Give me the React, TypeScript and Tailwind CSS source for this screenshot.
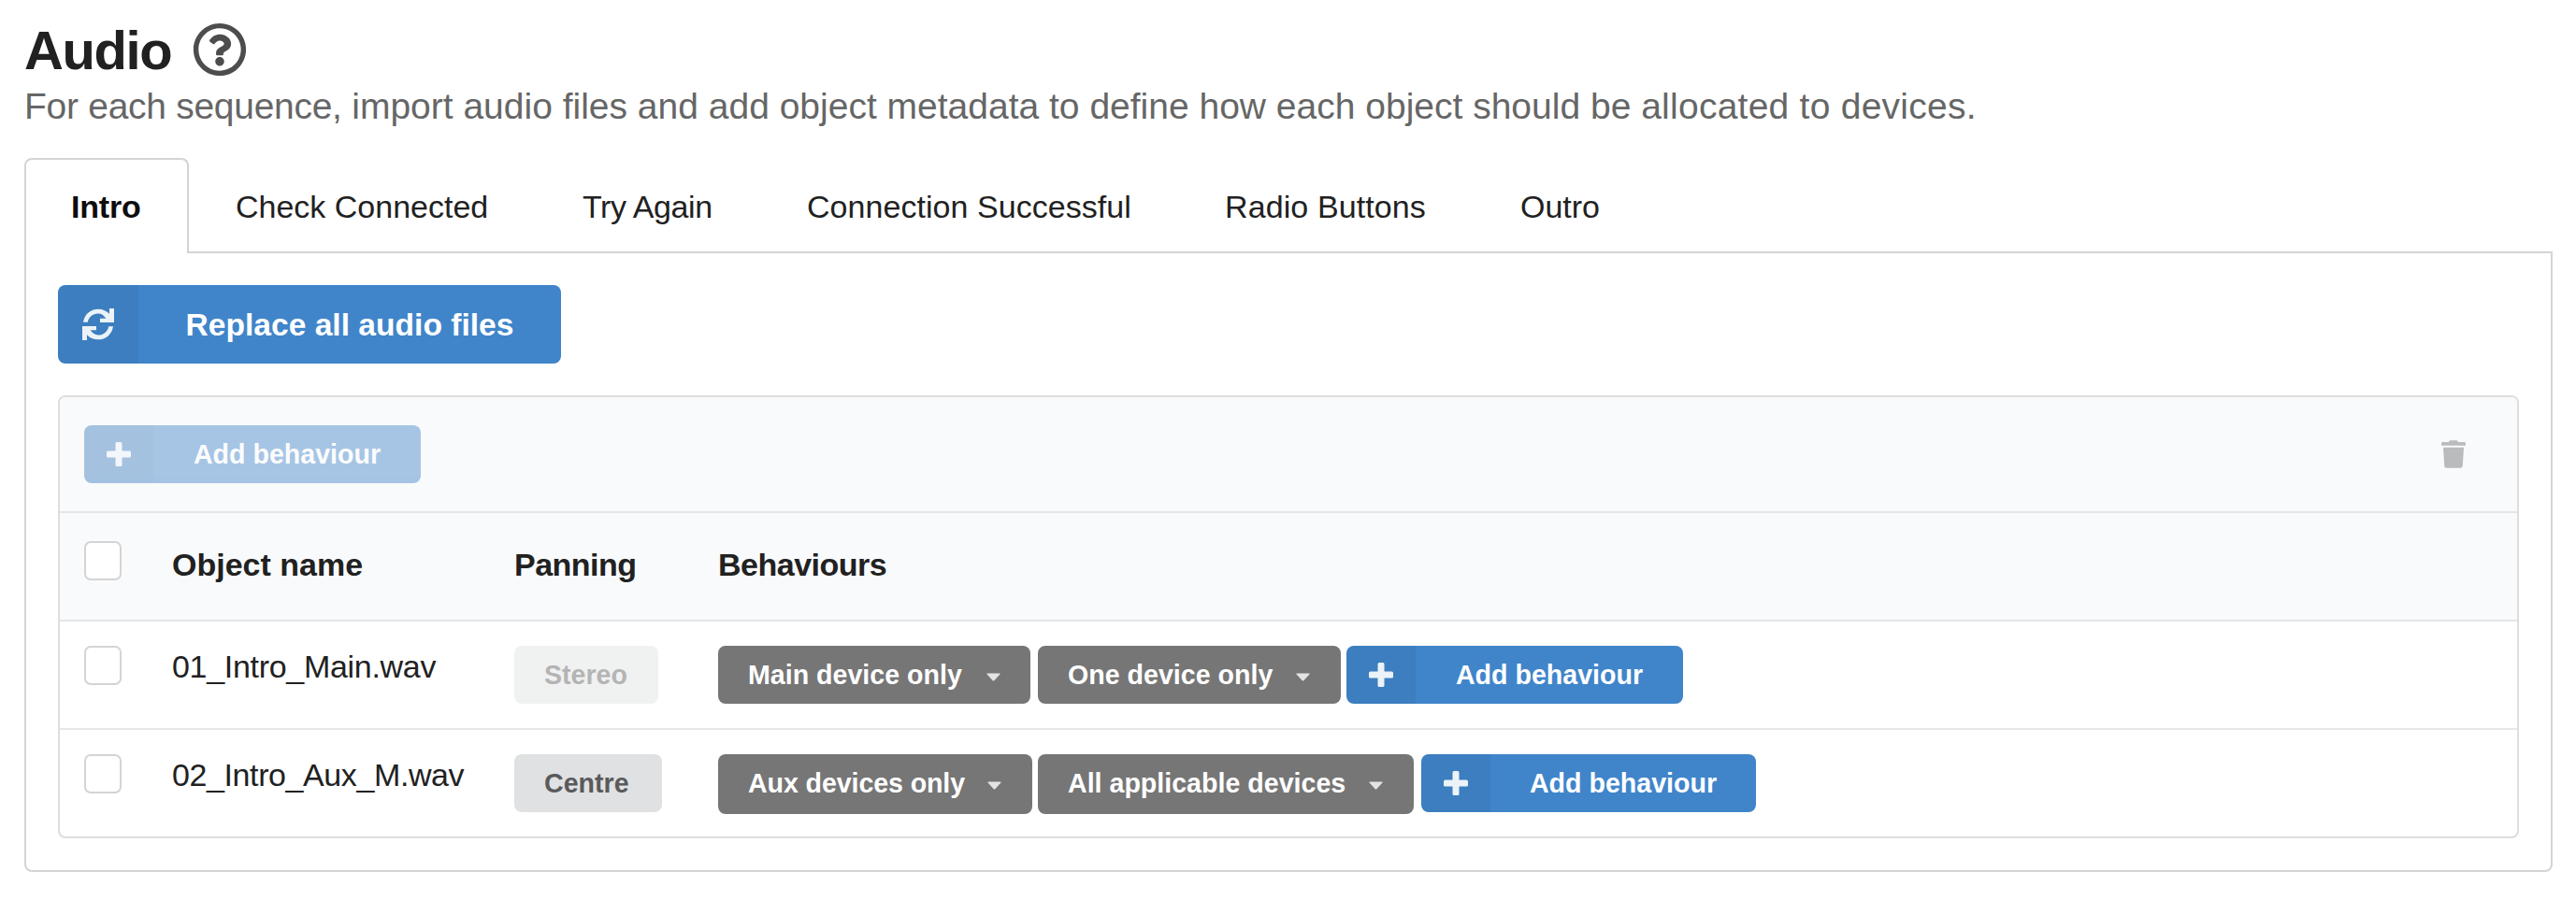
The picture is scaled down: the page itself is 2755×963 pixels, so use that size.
import { useState } from "react";
import { FaRegQuestionCircle } from "react-icons/fa";

const tabs = [
  { label: "Intro", box: "w-[176px] pl-[48px]", text: "tracking-[-0.2px]" },
  { label: "Check Connected", box: "w-[372px] pl-[50px]", text: "" },
  { label: "Try Again", box: "w-[239px] pl-[49px]", text: "tracking-[-0.4px]" },
  { label: "Connection Successful", box: "w-[447px] pl-[50px]", text: "tracking-[0.05px]" },
  { label: "Radio Buttons", box: "w-[316px] pl-[50px]", text: "tracking-[0.1px]" },
  { label: "Outro", box: "w-[190px] pl-[50px]", text: "" },
];

const rows = [
  {
    name: "01_Intro_Main.wav",
    nameText: "tracking-[-0.3px]",
    panning: "Stereo",
    locked: true,
    behaviours: [
      { label: "Main device only", box: "h-[62px] w-[334px] mr-[8px] pr-[32px]" },
      { label: "One device only", box: "h-[62px] w-[324px] mr-[6px] pr-[33px]" },
    ],
    addBox: "w-[360px]",
  },
  {
    name: "02_Intro_Aux_M.wav",
    nameText: "tracking-[-0.4px]",
    panning: "Centre",
    locked: false,
    behaviours: [
      { label: "Aux devices only", box: "h-[64px] w-[336px] mr-[6px] pr-[33px] tracking-[-0.1px]" },
      { label: "All applicable devices", box: "h-[64px] w-[402px] mr-[8px] pr-[33px]" },
    ],
    addBox: "w-[358px]",
  },
];

function PlusIcon() {
  return (
    <svg viewBox="0 0 26 26" className="size-[26px]" fill="currentColor">
      <path d="M11 0h4q1.500 0 1.500 1.500V9.500H24.500Q26 9.500 26 11v4q0 1.500-1.500 1.500H16.500V24.500Q16.500 26 15 26h-4q-1.500 0-1.500-1.500V16.500H1.500Q0 16.500 0 15v-4q0-1.500 1.500-1.500H9.500V1.500Q9.500 0 11 0Z" />
    </svg>
  );
}

function RefreshIcon() {
  const half = "M3 44.500C7 18 27 2 51 2C66 2 78 8 87 17.500V0H102V45H57V32H76C69 22 61 16.500 51 16.500C34 16.500 20 28 17.500 44.500Z";
  return (
    <svg viewBox="0 0 102 102" className="size-[34px]" fill="currentColor">
      <path d={half} />
      <path d={half} transform="rotate(180 51 51)" />
    </svg>
  );
}

function TrashIcon() {
  return (
    <svg viewBox="0 0 26 30" className="mt-[16px] h-[30px] w-[26px] text-[#babbbc]" fill="currentColor">
      <path d="M1.200 2H8L9 .3H17L18 2H24.800Q26 2 26 3.200V5.800H0V3.200Q0 2 1.200 2Z" />
      <path d="M2 7.800H24L22.800 27.600Q22.700 29.800 20.500 29.800H5.500Q3.300 29.800 3.200 27.600Z" />
    </svg>
  );
}

function CaretIcon() {
  return (
    <svg viewBox="0 0 15 9" className="mt-[29px] h-[9px] w-[15px] opacity-80" fill="currentColor">
      <path d="M1 .5H14Q15.200 .6 14.400 1.600L8.300 8.200Q7.500 8.900 6.700 8.200L.6 1.600Q-.2 .6 1 .5Z" />
    </svg>
  );
}

function Checkbox() {
  return <button type="button" role="checkbox" aria-checked={false} className="block h-[42px] w-[40px] rounded-[7px] border-2 border-[#d4d4d5] bg-white" />;
}

function AddButton({ box, disabled = false }: { box: string; disabled?: boolean }) {
  return (
    <button
      type="button"
      disabled={disabled}
      className={`flex h-[62px] overflow-hidden rounded-[8px] bg-[#4085ca] text-white ${box} ${disabled ? "opacity-45" : ""}`}
    >
      <span className="flex h-full w-[74px] items-center justify-center bg-black/5">
        <span className="opacity-90">
          <PlusIcon />
        </span>
      </span>
      <span className="flex-1 text-center text-[28.6px] leading-[63px] font-bold whitespace-nowrap">Add behaviour</span>
    </button>
  );
}

export default function App() {
  const [active, setActive] = useState("Intro");
  return (
    <main className="h-[963px] w-[2755px] overflow-hidden bg-white pt-[24px] pl-[26px] font-['Liberation_Sans',Arial,sans-serif] text-[34px] text-[#212121]">
      <header>
        <h1 className="flex h-[60px] items-center text-[58px] leading-[60px] font-bold">
          <span className="w-[180px] tracking-[-1.4px]">Audio</span>
          <FaRegQuestionCircle className="-mt-[2px] size-[58px] text-[#4d4d4d]" />
        </h1>
        <p className="h-[85px] text-[39px] leading-[60px] whitespace-nowrap text-[#666666]">
          <span className="tracking-[-0.28px]">For each sequence, </span>
          import audio files and add object metadata to define how each object should be{" "}
          <span className="tracking-[0.25px]">allocated to devices.</span>
        </p>
      </header>

      <nav className="flex h-[102px]">
        {tabs.map((tab) => (
          <button
            key={tab.label}
            type="button"
            onClick={() => setActive(tab.label)}
            className={`text-left leading-[101px] whitespace-nowrap ${tab.box} ${
              tab.label === active
                ? "relative z-10 rounded-t-[8px] border-2 border-b-0 border-[#d4d4d5] bg-white font-bold text-[#0d0d0d]"
                : "h-[102px] pt-[2px]"
            }`}
          >
            <span className={tab.text}>{tab.label}</span>
          </button>
        ))}
      </nav>

      <section className="-mt-[2px] h-[664px] w-[2704px] rounded-b-[8px] border-2 border-[#d4d4d5] px-[34px] pt-[34px]">
        <button type="button" className="flex h-[84px] w-[538px] overflow-hidden rounded-[8px] bg-[#4085ca] text-white">
          <span className="flex h-full w-[86px] items-center justify-center bg-black/5">
            <span className="opacity-90">
              <RefreshIcon />
            </span>
          </span>
          <span className="flex-1 text-center text-[33.6px] leading-[85px] font-bold whitespace-nowrap">Replace all audio files</span>
        </button>

        <div className="mt-[34px] h-[474px] w-[2632px] overflow-hidden rounded-[8px] border-2 border-[#dededf]">
          <div className="flex h-[124px] items-start justify-between border-b-2 border-[#e4e5e6] bg-[#f9fafc] pt-[30px] pr-[55px] pl-[26px]">
            <AddButton box="w-[360px]" disabled />
            <TrashIcon />
          </div>
          <div className="flex h-[116px] border-b-2 border-[#e4e5e6] bg-[#f9fafc] pt-[30px] pl-[26px] font-bold">
            <div className="w-[94px]">
              <Checkbox />
            </div>
            <div className="w-[366px] leading-[50px]">Object name</div>
            <div className="w-[218px] leading-[50px] tracking-[-0.5px]">Panning</div>
            <div className="leading-[50px] tracking-[-0.5px]">Behaviours</div>
          </div>
          {rows.map((row, i) => (
            <div key={row.name} className={`flex h-[116px] items-start pt-[26px] pl-[26px] ${i === 0 ? "border-b-2 border-[#e7e7e8]" : ""}`}>
              <div className="w-[94px]">
                <Checkbox />
              </div>
              <div className={`w-[366px] leading-[44px] whitespace-nowrap ${row.nameText}`}>{row.name}</div>
              <div className="w-[218px]">
                <span
                  className={`inline-block h-[62px] rounded-[8px] bg-[#e0e1e2] px-[32px] text-[28.6px] leading-[63px] font-bold text-[#5a5a5b] ${
                    row.locked ? "w-[154px] opacity-45" : "w-[158px]"
                  }`}
                >
                  {row.panning}
                </span>
              </div>
              {row.behaviours.map((b) => (
                <button
                  key={b.label}
                  type="button"
                  className={`flex justify-between rounded-[8px] bg-[#767676] pl-[32px] text-[28.6px] leading-[63px] font-bold whitespace-nowrap text-white ${b.box}`}
                >
                  {b.label}
                  <CaretIcon />
                </button>
              ))}
              <AddButton box={row.addBox} />
            </div>
          ))}
        </div>
      </section>
    </main>
  );
}
